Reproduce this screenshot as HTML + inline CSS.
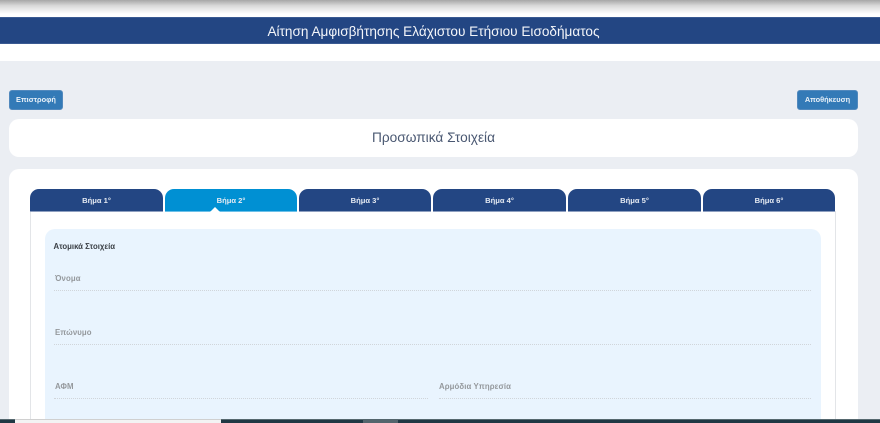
<!DOCTYPE html>
<html lang="el"><head><meta charset="utf-8"><title>Αίτηση</title>
<style>
*{box-sizing:border-box}
html,body{margin:0;padding:0}
body{width:880px;height:423px;position:relative;overflow:hidden;background:#fff;font-family:"Liberation Sans","DejaVu Sans",sans-serif}
.a{position:absolute}
.t{position:absolute;white-space:nowrap}
.tab{position:absolute;top:188.5px;height:23px;background:#234683;border-radius:9px 9px 0 0;border-bottom:1px solid #8e9fc0;color:#e6ebf3;font-size:7.6px;font-weight:bold;text-align:center;line-height:23px}
.btn{position:absolute;top:90px;height:20px;background:#337ab7;border:1px solid #5289bd;border-radius:3px;color:#eaf2f9;font-size:7.4px;font-weight:bold;text-align:center;line-height:18.5px}
.lab{position:absolute;color:#94989c;font-size:7.8px;font-weight:bold;white-space:nowrap;letter-spacing:.1px}
.dot{position:absolute;height:0;border-top:1px dotted #d0d5da}
</style></head><body>
<div class="a" style="left:0;top:0;width:880px;height:14px;background:linear-gradient(#a6a6a6,#d8d8d8 40%,#fff)"></div>
<div class="a" style="left:0;top:17px;width:880px;height:27px;background:#234683;border-top:1px solid #3a5a92;border-bottom:1px solid #3a5a92"></div>
<div class="t" style="left:0;top:17.5px;width:867px;text-align:center;color:#f4f6fa;font-size:13.6px;line-height:27px">Αίτηση Αμφισβήτησης Ελάχιστου Ετήσιου Εισοδήματος</div>
<div class="a" style="left:0;top:61px;width:880px;height:358px;background:#ebeef3"></div>

<div class="btn" style="left:9px;width:54px">Επιστροφή</div>
<div class="btn" style="left:797px;width:61px">Αποθήκευση</div>

<div class="a" style="left:9px;top:119px;width:849px;height:38px;background:#fff;border-radius:10px"></div>
<div class="t" style="left:9px;top:119px;width:849px;text-align:center;color:#4a5872;font-size:13.7px;line-height:38px">Προσωπικά Στοιχεία</div>

<div class="a" style="left:9px;top:169px;width:849px;height:254px;background:#fff;border-radius:10px 10px 0 0"></div>
<div class="a" style="left:30px;top:211px;width:806px;height:212px;border-left:1px solid #e3e5e8;border-right:1px solid #e3e5e8"></div>

<div class="tab" style="left:30px;width:133px">Βήμα 1°</div>
<div class="tab" style="left:165px;width:132px;background:#0090d3;border-bottom-color:#6cc0e8">Βήμα 2°</div>
<div class="a" style="left:210px;top:207px;width:0;height:0;border-left:5px solid transparent;border-right:5px solid transparent;border-bottom:5px solid #fff"></div>
<div class="tab" style="left:299px;width:132px">Βήμα 3°</div>
<div class="tab" style="left:433px;width:133px">Βήμα 4°</div>
<div class="tab" style="left:568px;width:133px">Βήμα 5°</div>
<div class="tab" style="left:703px;width:132px">Βήμα 6°</div>

<div class="a" style="left:45px;top:229px;width:776px;height:194px;background:#e9f4fe;border-radius:10px 10px 0 0"></div>
<div class="t" style="left:53.5px;top:241.5px;color:#3a3f45;font-size:7.8px;font-weight:bold;line-height:10px">Ατομικά Στοιχεία</div>

<div class="lab" style="left:55px;top:273.5px;line-height:10px">Όνομα</div>
<div class="dot" style="left:54px;top:290px;width:757px"></div>
<div class="lab" style="left:55px;top:327.5px;line-height:10px">Επώνυμο</div>
<div class="dot" style="left:54px;top:344px;width:757px"></div>
<div class="lab" style="left:55px;top:381.5px;line-height:10px">ΑΦΜ</div>
<div class="dot" style="left:54px;top:398px;width:374px"></div>
<div class="lab" style="left:439px;top:381.5px;line-height:10px">Αρμόδια Υπηρεσία</div>
<div class="dot" style="left:439px;top:398px;width:372px"></div>

<div class="a" style="left:0;top:419px;width:880px;height:4px;background:#1f3844;border-top:1px solid #56686f"></div>
<div class="a" style="left:15px;top:419px;width:206px;height:4px;background:#f3f3f3;border-top:1px solid #d0d0d0"></div>
<div class="a" style="left:363px;top:419px;width:35px;height:4px;background:#53656d"></div>
</body></html>
